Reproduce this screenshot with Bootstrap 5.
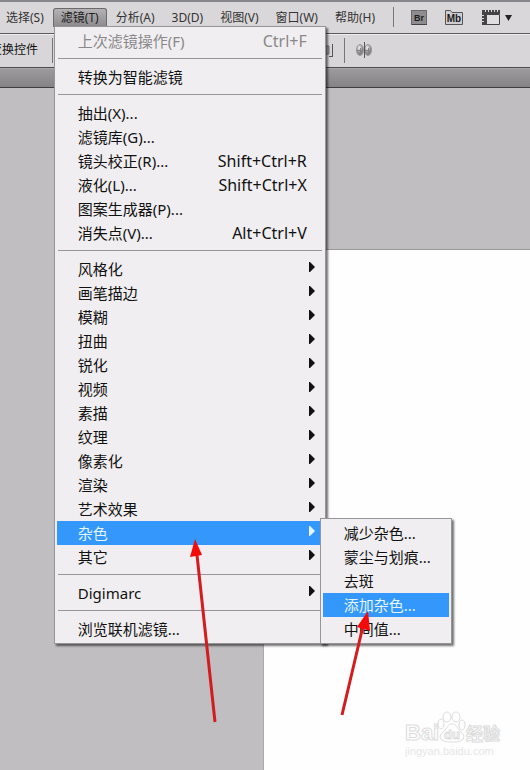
<!DOCTYPE html>
<html lang="zh-CN">
<head>
<meta charset="utf-8">
<meta name="viewport" content="width=device-width, initial-scale=1">
<title>滤镜</title>
<link href="https://cdn.jsdelivr.net/npm/bootstrap@5.3.0/dist/css/bootstrap.min.css" rel="stylesheet">
<style>
body{font-family:"Noto Sans","Noto Sans CJK SC",sans-serif;font-size:15px;line-height:24px;color:#111;background:#c0bec0;overflow:hidden}
.menubar{height:34px;background:#d9d7d9;border-top:2px solid #85878c;border-bottom:1px solid #5c5c5e;padding-top:6px;gap:1px}
.menubar-btn{font-size:12px;line-height:18px;color:#333;background:none;border:1px solid transparent;border-bottom:0;padding:0 7px;height:19px;white-space:nowrap;border-radius:3px 3px 0 0}
.menubar-btn.first{margin-left:-2px}
.menubar-btn.open{display:block;background:linear-gradient(#b4b2b4,#8b898b);border-color:#6b696b;color:#222}
.tool-btn{border:0;padding:0;background:none;line-height:0}
.optbar{height:34px;background:#d8d6d8;border-top:1px solid #efedef;border-bottom:1px solid #4c4c4e;font-size:12px;padding:3px 0 4px}
.opt-label{margin-left:-10px;margin-right:14px}
.vline{width:1px;background:#77757a}
.menubar .vline{height:20px;margin:-1px 16px 0 9px}
.align-tools{padding-right:153px}
.align-tools .vline{margin:0 8px 0 10px}
.tabband{height:20px;background:linear-gradient(#9c9a9c,#858385);border-bottom:1px solid #3e3e40;border-top:1px solid #aaa8aa}
.workspace{padding:161px 0 0 263px}
.sheet{background:#fefefe;border-left:1px solid #aaa;border-top:1px solid #999}
.popup{background:#f0eef0;border:1px solid #97959a;box-shadow:2px 2px 2px rgba(0,0,0,.55);padding:2px;list-style:none;margin:0}
.main-popup{top:18px;left:1px;width:272px;z-index:5}
.sub-popup{top:-3px;left:263px;width:132px;z-index:6}
.entry{display:flex;justify-content:space-between;width:100%;height:24px;border:0;background:none;color:#111;padding:0 16px 0 21px;line-height:24px;text-align:left;white-space:nowrap}
.entry kbd{font:inherit;font-size:16px;line-height:24px;padding:0;background:none;color:inherit}
.entry:disabled{color:#8a888a}
.entry.chosen{background:#3397fb;color:#e4f6ff}
.entry svg{width:6px;height:10px;margin:5px -8px 0 0}
.rule{height:1px;background:#98969a;margin:5px 1px 6px}
.overlay{z-index:10;pointer-events:none}
.stamp{right:27px;bottom:6px;z-index:3}
</style>
<script src="https://cdn.jsdelivr.net/npm/bootstrap@5.3.0/dist/js/bootstrap.bundle.min.js"></script>
</head>
<body class="d-flex flex-column vh-100 position-relative">
<svg class="d-none"><symbol id="tri" viewBox="0 0 6 10"><path fill="currentColor" d="M0 0h1l5 5-5 5H0z"/></symbol></svg>
<nav class="menubar d-flex flex-shrink-0 align-items-start" aria-label="主菜单">
  <button class="menubar-btn first">选择(S)</button>
  <div class="position-relative">
    <button class="menubar-btn open" aria-expanded="true">滤镜(T)</button>
    <ul class="popup main-popup position-absolute">
      <li><button class="entry" disabled><span>上次滤镜操作(F)</span><kbd>Ctrl+F</kbd></button></li>
      <li class="rule"></li>
      <li><button class="entry">转换为智能滤镜</button></li>
      <li class="rule"></li>
      <li><button class="entry">抽出(X)...</button></li>
      <li><button class="entry">滤镜库(G)...</button></li>
      <li><button class="entry"><span>镜头校正(R)...</span><kbd>Shift+Ctrl+R</kbd></button></li>
      <li><button class="entry"><span>液化(L)...</span><kbd>Shift+Ctrl+X</kbd></button></li>
      <li><button class="entry">图案生成器(P)...</button></li>
      <li><button class="entry"><span>消失点(V)...</span><kbd>Alt+Ctrl+V</kbd></button></li>
      <li class="rule"></li>
      <li><button class="entry">风格化<svg><use href="#tri"/></svg></button></li>
      <li><button class="entry">画笔描边<svg><use href="#tri"/></svg></button></li>
      <li><button class="entry">模糊<svg><use href="#tri"/></svg></button></li>
      <li><button class="entry">扭曲<svg><use href="#tri"/></svg></button></li>
      <li><button class="entry">锐化<svg><use href="#tri"/></svg></button></li>
      <li><button class="entry">视频<svg><use href="#tri"/></svg></button></li>
      <li><button class="entry">素描<svg><use href="#tri"/></svg></button></li>
      <li><button class="entry">纹理<svg><use href="#tri"/></svg></button></li>
      <li><button class="entry">像素化<svg><use href="#tri"/></svg></button></li>
      <li><button class="entry">渲染<svg><use href="#tri"/></svg></button></li>
      <li><button class="entry">艺术效果<svg><use href="#tri"/></svg></button></li>
      <li class="position-relative">
        <button class="entry chosen" aria-expanded="true">杂色<svg><use href="#tri"/></svg></button>
        <ul class="popup sub-popup position-absolute">
          <li><button class="entry">减少杂色...</button></li>
          <li><button class="entry">蒙尘与划痕...</button></li>
          <li><button class="entry">去斑</button></li>
          <li><button class="entry chosen">添加杂色...</button></li>
          <li><button class="entry">中间值...</button></li>
        </ul>
      </li>
      <li><button class="entry">其它<svg><use href="#tri"/></svg></button></li>
      <li class="rule"></li>
      <li><button class="entry">Digimarc<svg><use href="#tri"/></svg></button></li>
      <li class="rule"></li>
      <li><button class="entry">浏览联机滤镜...</button></li>
    </ul>
  </div>
  <button class="menubar-btn">分析(A)</button>
  <button class="menubar-btn">3D(D)</button>
  <button class="menubar-btn">视图(V)</button>
  <button class="menubar-btn">窗口(W)</button>
  <button class="menubar-btn">帮助(H)</button>
  <span class="vline"></span>
  <button class="tool-btn" aria-label="Bridge"><svg width="16" height="18" font-family="Liberation Sans, sans-serif" font-weight="bold" font-size="9"><rect x=".5" y="2.5" width="15" height="14" fill="#8e8c8f" stroke="#6a686b"/><path d="M1 16.500h15" fill="none" stroke="#444"/><text x="8" y="13" text-anchor="middle" fill="#1c1c1c">Br</text></svg></button>
  <button class="tool-btn ms-3" aria-label="Mini Bridge"><svg width="20" height="18" font-family="Liberation Sans, sans-serif" font-weight="bold" font-size="10"><path d="M1.500 16.500V2.500h5l1.500 2h10.500v12z" fill="#cfcdcf" stroke="#555"/><text x="10" y="14" text-anchor="middle" fill="#1c1c1c">Mb</text></svg></button>
  <button class="tool-btn ms-3" aria-label="查看额外内容"><svg width="34" height="18"><path d="M1 2h18v4H6v11H1z" fill="#444"/><path d="M4.500 2v2M7.500 2v2M10.500 2v2M13.500 2v2M16.500 2v2M1 7.500h2M1 10.500h2M1 13.500h2" stroke="#d9d7d9"/><path d="M5.500 6.500h13v10h-13z" fill="#e0dee0" stroke="#444"/><path d="M24 7h7l-3.500 6z" fill="#222"/></svg></button>
</nav>
<div class="optbar d-flex flex-shrink-0">
  <span class="opt-label text-nowrap">变换控件</span>
  <span class="vline"></span>
  <div class="align-tools d-flex ms-auto">
    <button class="tool-btn" aria-label="分布"><svg width="10" height="26"><path d="M0 8h5v8H0z" fill="#a9a7aa" stroke="#777"/><path d="M8.500 6v13M5 18.500h4" stroke="#555"/></svg></button>
    <span class="vline"></span>
    <button class="tool-btn" aria-label="自动对齐图层"><svg width="24" height="26"><defs><radialGradient id="ball" cx=".4" cy=".3"><stop offset="0" stop-color="#f2f2f2"/><stop offset="1" stop-color="#858387"/></radialGradient></defs><g fill="url(#ball)" stroke="#9a989c"><ellipse cx="7" cy="12" rx="3.500" ry="5.500"/><ellipse cx="15" cy="12" rx="3.500" ry="5.500"/></g><path d="M4 12.500h6M12 12.500h6M7.500 10v5M15.500 10v5" stroke="#858387"/><path d="M11.500 4v16" stroke="#555"/></svg></button>
  </div>
</div>
<div class="tabband flex-shrink-0"></div>
<main class="workspace d-flex flex-grow-1"><div class="sheet flex-grow-1"></div></main>
<svg class="stamp position-absolute" width="98" height="54" fill="#fff" stroke="#dcdcdc" font-family="Liberation Sans, Noto Sans CJK SC, sans-serif">
  <g font-weight="bold" stroke-width="1"><text x="0" y="30" font-size="22">Bai</text><text x="61" y="30" font-size="17">经验</text></g>
  <g><ellipse cx="36" cy="14" rx="3" ry="5"/><ellipse cx="42" cy="7" rx="4" ry="5"/><ellipse cx="51" cy="7" rx="4" ry="5"/><ellipse cx="57" cy="15" rx="3" ry="5"/><path d="M47 14c4 0 6 4 8 7 3 3 5 5 3 8s-7 3-11 3-9 0-11-3 0-5 3-8 4-7 8-7z"/></g>
  <text x="47" y="29" text-anchor="middle" font-size="13" font-weight="bold">du</text>
  <text x="0" y="45" font-size="11" fill="#e6e6e6" stroke="none">jingyan.baidu.com</text>
</svg>
<svg class="overlay position-absolute top-0 start-0 w-100 h-100">
  <g stroke="#d31c20" stroke-width="3"><path d="M197 555L215 722M363 626L342 715"/></g>
  <g fill="#f50a0a"><path d="M195 539l7 16-12 2zM368 611l2 20-13-4z"/></g>
</svg>
</body>
</html>
